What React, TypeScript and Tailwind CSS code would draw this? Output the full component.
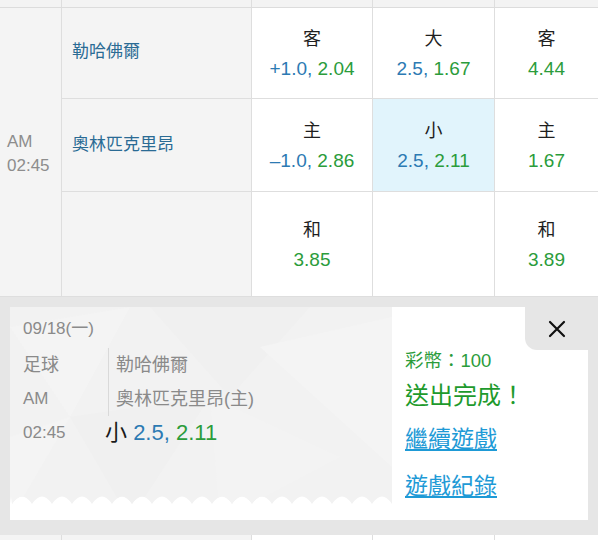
import React from "react";

const BLUE = "text-[#2c7ab3]";
const GREEN = "text-[#2b9c3b]";

type OddsProps = {
  label?: string;
  a?: string;
  b: string;
  active?: boolean;
  last?: boolean;
};

const Odds = ({ label, a, b, active, last }: OddsProps) => {
  return (
    <div
      className={`flex flex-col items-center justify-center pt-[2px] border-b border-[#dedede] text-[19px] leading-[29px] ${
        last ? "" : "border-r"
      } ${active ? "bg-[#e1f4fc]" : "bg-white"}`}
    >
      {label && <p className="text-[18px] text-[#1f1f1f]">{label}</p>}
      {label && (
        <p>
          {a && <span className={BLUE}>{a} </span>}
          <span className={GREEN}>{b}</span>
        </p>
      )}
    </div>
  );
};

// scalloped bottom of the ticket panel
const scallopPath = () => {
  let d = "M0,0 H382 V197";
  for (let x = 382; x > 0; x -= 20) {
    const nx = Math.max(x - 20, 0);
    d += ` Q${(x + nx) / 2},182 ${nx},197`;
  }
  return d + " Z";
};

const Ticket = () => {
  return (
    <div className="relative w-[382px] shrink-0">
      <svg
        className="absolute inset-0"
        width="382"
        height="213"
        viewBox="0 0 382 213"
      >
        <defs>
          <clipPath id="tk">
            <path d={scallopPath()} />
          </clipPath>
        </defs>
        <g clipPath="url(#tk)">
          <rect width="382" height="213" fill="#f2f2f2" />
          <polygon points="0,20 120,0 60,110" fill="#f4f4f4" />
          <polygon points="140,0 300,0 220,90" fill="#f0f0f0" />
          <polygon points="250,40 382,10 382,160" fill="#f4f4f4" />
          <polygon points="60,110 200,90 120,213" fill="#f0f0f0" />
          <polygon points="200,90 330,150 210,213" fill="#f3f3f3" />
          <polygon points="0,130 60,110 0,213" fill="#f4f4f4" />
        </g>
      </svg>

      <div className="relative pl-[13px] pt-[11px] text-[18px] text-[#8a8a8a]">
        <p className="h-[22px] text-[17px] leading-[22px]">09/18(一)</p>
        <div className="mt-[8px] grid grid-cols-[85px_1fr] grid-rows-[34px_34px_34px] leading-[34px]">
          <p>足球</p>
          <p className="border-l border-[#d9d9d9] pl-[7px]">勒哈佛爾</p>
          <p className="text-[17px]">AM</p>
          <p className="border-l border-[#d9d9d9] pl-[7px]">奧林匹克里昂(主)</p>
          <p className="text-[17px]">02:45</p>
          <p className="-ml-[3px] text-[22px]">
            <span className="text-[#1a1a1a]">小 </span>
            <span className={BLUE}>2.5, </span>
            <span className={GREEN}>2.11</span>
          </p>
        </div>
      </div>
    </div>
  );
};

const Result = () => {
  return (
    <div className="relative h-[213px] bg-white flex">
      <Ticket />
      <div className="pl-[13px] pt-[42px] flex flex-col">
        <p className="text-[18.5px] leading-[24px] text-[#2b9c3b]">彩幣：100</p>
        <p className="mt-[6px] text-[24px] leading-[34px] text-[#1e9a2c]">送出完成！</p>
        <a href="#" className="mt-[10px] text-[23px] leading-[32px] text-[#1e9ad6] underline underline-offset-2">
          繼續遊戲
        </a>
        <a href="#" className="mt-[15px] text-[23px] leading-[32px] text-[#1e9ad6] underline underline-offset-2">
          遊戲紀錄
        </a>
      </div>

      <button className="absolute top-0 right-0 w-[63px] h-[43px] bg-[#e6e6e6] rounded-bl-[12px] grid place-items-center">
        <svg width="18" height="18" viewBox="0 0 18 18">
          <path d="M2 2 L16 16 M16 2 L2 16" stroke="#111" strokeWidth="2.2" strokeLinecap="round" />
        </svg>
      </button>
    </div>
  );
};

export default function App() {
  return (
    <div className="w-[598px] h-[540px] overflow-hidden bg-white font-['Liberation_Sans','Noto_Sans_CJK_TC',sans-serif]">
      {/* previous row tail */}
      <div className="grid grid-cols-[62px_190px_121px_122px_1fr] h-[8px] border-b border-[#dcdcdc] bg-[#f3f3f3]">
        <div className="border-r border-[#dedede]" />
        <div className="border-r border-[#dedede]" />
        <div className="border-r border-[#dedede]" />
        <div className="border-r border-[#dedede]" />
        <div />
      </div>

      <div className="grid grid-cols-[62px_190px_121px_122px_1fr] grid-rows-[91px_93px_105px]">
        <div className="row-span-3 border-r border-b border-[#dedede] bg-[#f4f4f4] flex flex-col justify-center pl-[7px] pt-[4px] text-[17px] leading-[24px] text-[#8d8d8d]">
          <p>AM</p>
          <p>02:45</p>
        </div>

        <div className="border-r border-b border-[#dedede] bg-[#f4f4f4] pl-[10px] flex items-center pb-[2px] text-[17px] text-[#2a6b94]">
          勒哈佛爾
        </div>
        <Odds label="客" a="+1.0," b="2.04" />
        <Odds label="大" a="2.5," b="1.67" />
        <Odds label="客" b="4.44" last />

        <div className="border-r border-b border-[#dedede] bg-[#f4f4f4] pl-[10px] flex items-center text-[17px] text-[#2a6b94]">
          奧林匹克里昂
        </div>
        <Odds label="主" a="–1.0," b="2.86" />
        <Odds label="小" a="2.5," b="2.11" active />
        <Odds label="主" b="1.67" last />

        <div className="border-r border-b border-[#dedede] bg-[#f4f4f4]" />
        <Odds label="和" b="3.85" />
        <Odds b="" />
        <Odds label="和" b="3.89" last />
      </div>

      <div className="bg-[#e6e6e6] pt-[10px] px-[10px] pb-[15px]">
        <Result />
      </div>

      <div className="grid grid-cols-[62px_190px_121px_122px_1fr] h-[5px]">
        <div className="border-r border-[#dedede] bg-[#f4f4f4]" />
        <div className="border-r border-[#dedede] bg-[#f4f4f4]" />
        <div className="border-r border-[#dedede]" />
        <div className="border-r border-[#dedede]" />
        <div />
      </div>
    </div>
  );
}
